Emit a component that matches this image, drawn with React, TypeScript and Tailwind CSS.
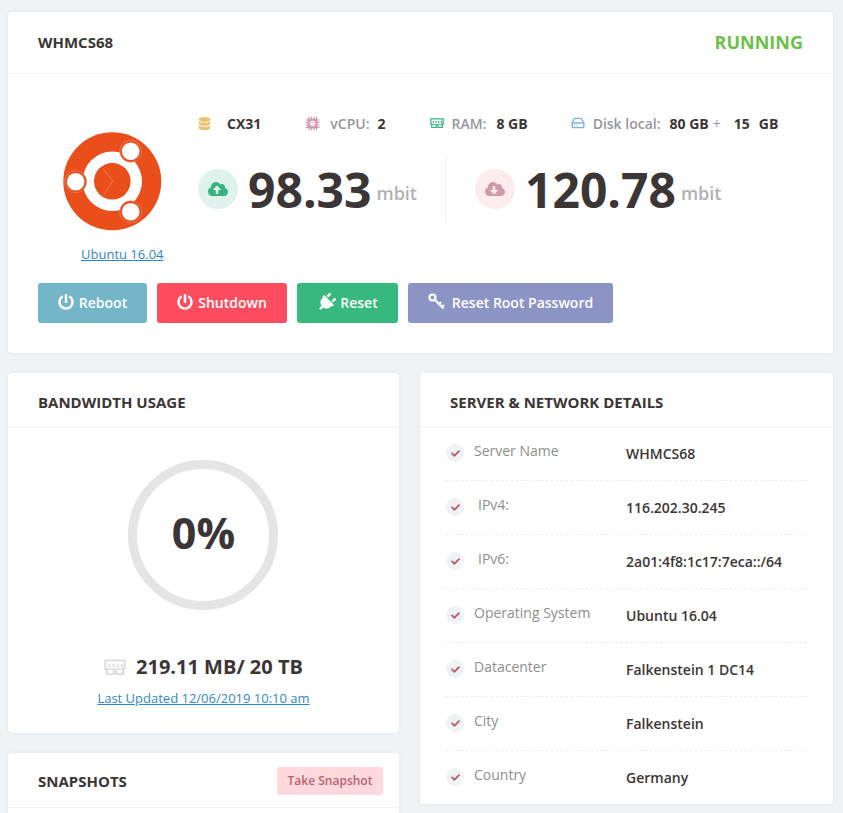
import { FaCheck, FaCloudDownloadAlt, FaCloudUploadAlt, FaDatabase, FaPlug, FaPowerOff } from "react-icons/fa"
import { HardDrive } from "lucide-react"

const details = [
  { label: "Server Name", value: "WHMCS68" },
  { label: "IPv4:", value: "116.202.30.245", indent: true },
  { label: "IPv6:", value: "2a01:4f8:1c17:7eca::/64", indent: true },
  { label: "Operating System", value: "Ubuntu 16.04" },
  { label: "Datacenter", value: "Falkenstein 1 DC14" },
  { label: "City", value: "Falkenstein" },
  { label: "Country", value: "Germany" },
]

function UbuntuLogo() {
  return (
    <svg width="100" height="100" viewBox="0 0 100 100" className="block">
      <circle cx="49.300" cy="49.300" r="49" fill="#e94e1b" />
      <circle cx="49.300" cy="49.300" r="29.700" fill="#fff" />
      <circle cx="49.300" cy="49.300" r="18.300" fill="#e94e1b" />
      <path d="M40.300 37.300 L49.700 48.700 L40.300 64" fill="none" stroke="#f3987a" strokeWidth="0.6" />
      <circle cx="12.700" cy="49.700" r="11" fill="#e94e1b" stroke="#f3987a" strokeWidth="0.5" />
      <circle cx="12.700" cy="49.700" r="8.800" fill="#fff" />
      <circle cx="67.700" cy="19.300" r="11" fill="#e94e1b" stroke="#f3987a" strokeWidth="0.5" />
      <circle cx="67.700" cy="19.300" r="8.800" fill="#fff" />
      <circle cx="67.700" cy="79.700" r="11" fill="#e94e1b" stroke="#f3987a" strokeWidth="0.5" />
      <circle cx="67.700" cy="79.700" r="8.800" fill="#fff" />
    </svg>
  )
}

function ChipIcon() {
  return (
    <svg width="15" height="15" viewBox="0 0 15 15" className="ml-[44px] text-[#cf9ab0]">
      <path d="M4 0.500V14.500M6.500 0.500V14.500M9 0.500V14.500M11.500 0.500V14.500M0.500 4H14.500M0.500 6.500H14.500M0.500 9H14.500M0.500 11.500H14.500" stroke="currentColor" strokeWidth="1" />
      <rect x="2.500" y="2.500" width="10" height="10" rx="1" fill="currentColor" />
      <circle cx="7.500" cy="7.500" r="3" fill="#fff" opacity="0.7" />
    </svg>
  )
}

function RamIcon({ className, size }: { className: string; size: number }) {
  return (
    <svg width={size} height={(size * 12) / 16} viewBox="0 0 16 12" fill="none" stroke="currentColor" className={className}>
      <path d="M1 1H15V7H14V11H9V9H7V11H2V7H1Z" strokeWidth="1.400" />
      <path d="M4 3.500V6M7 3.500V6M10 3.500V6M13 3.500V6" strokeWidth="1.400" />
      <path d="M1 7.500H15" strokeWidth="1" />
    </svg>
  )
}

function KeyIcon() {
  return (
    <svg width="17" height="17" viewBox="0 0 17 17" fill="none" stroke="currentColor" strokeWidth="2.200" className="mr-[7px] -mt-[2px]">
      <circle cx="4.500" cy="4.500" r="3" />
      <path d="M7 7L15.500 15.500M11 11L13 9M14 14L16 12" />
    </svg>
  )
}

function Speed({ value, up }: { value: string; up?: boolean }) {
  return (
    <div className="flex items-center">
      <div className={`w-10 h-10 rounded-full flex items-center justify-center ${up ? "bg-[#dff2ec]" : "bg-[#fdecee]"}`}>
        {up ? <FaCloudUploadAlt size={20} className="text-[#36b37e]" /> : <FaCloudDownloadAlt size={20} className="text-[#cf9aa8]" />}
      </div>
      <span className="ml-[10px] mt-[2px] text-[48px] leading-[60px] font-bold text-[#3b3535]">{value}</span>
      <span className="ml-[5px] mt-[8px] text-[18px] font-semibold text-[#b1b1b5]">mbit</span>
    </div>
  )
}

export default function App() {
  return (
    <div className="h-[813px] overflow-hidden bg-[#eff3f6] px-2 pt-3 font-['Open_Sans',sans-serif] text-[#3b3535]">
      {/* server card */}
      <div className="w-[825px] h-[341px] bg-white rounded shadow-[0_0_4px_rgba(0,0,0,0.06)]">
        <div className="h-[62px] flex items-center justify-between px-[30px] border-b border-[#f1f3f5]">
          <h1 className="text-[15px] font-bold pb-[1px]">WHMCS68</h1>
          <span className="text-[18px] font-bold text-[#6cc04a]">RUNNING</span>
        </div>
        <div className="flex pl-[30px] pt-[32px]">
          <div className="w-[160px] pl-[25px] flex flex-col">
            <div className="mt-[26px]"><UbuntuLogo /></div>
            <a className="ml-[18px] mt-[13px] text-[13px] text-[#2f86d0] underline whitespace-nowrap">Ubuntu 16.04</a>
          </div>
          <div>
            <div className="flex items-center text-[14px] h-[34px]">
              <FaDatabase size={13} className="text-[#e8c46e]" />
              <b className="ml-[16px]">CX31</b>
              <ChipIcon />
              <span className="ml-[10px] font-semibold text-[#96969e]">vCPU:</span>
              <b className="ml-[8px]">2</b>
              <RamIcon size={14} className="ml-[44px] text-[#36b37e]" />
              <span className="ml-[8px] font-semibold text-[#96969e]">RAM:</span>
              <b className="ml-[10px]">8 GB</b>
              <HardDrive size={14} strokeWidth={2.4} className="ml-[43px] text-[#7db3ea]" />
              <span className="ml-[8px] font-semibold text-[#96969e]">Disk local:</span>
              <b className="ml-[9px]">80 GB</b>
              <span className="ml-[4px] text-[#96969e]">+</span>
              <b className="ml-[13px]">15</b>
              <b className="ml-[9px]">GB</b>
            </div>
            <div className="flex items-center mt-[15px]">
              <div className="w-[247px]"><Speed up value="98.33" /></div>
              <div className="w-px h-[68px] bg-[#f1f1f1]" />
              <div className="ml-[29px]"><Speed value="120.78" /></div>
            </div>
          </div>
        </div>
        <div className="flex gap-[10px] pl-[30px] mt-[18px] text-white text-[14px] font-semibold">
          <button className="w-[109px] h-10 rounded-[3px] bg-[#72b6c8] flex items-center justify-center"><FaPowerOff size={16} className="mr-[5px] -mt-[2px]" />Reboot</button>
          <button className="w-[130px] h-10 rounded-[3px] bg-[#ff4d5f] flex items-center justify-center"><FaPowerOff size={16} className="mr-[5px] -mt-[2px]" />Shutdown</button>
          <button className="w-[101px] h-10 rounded-[3px] bg-[#36b87f] flex items-center justify-center"><FaPlug size={19} className="mr-[4px] rotate-45" />Reset</button>
          <button className="w-[205px] h-10 rounded-[3px] bg-[#8c94c6] flex items-center justify-center"><KeyIcon />Reset Root Password</button>
        </div>
      </div>

      <div className="flex mt-5 items-start">
        <div className="w-[391px]">
          {/* bandwidth */}
          <div className="h-[360px] bg-white rounded shadow-[0_0_4px_rgba(0,0,0,0.06)]">
            <div className="h-[55px] flex items-center px-[30px] border-b border-[#f1f3f5]">
              <h2 className="text-[15px] font-bold pt-[5px]">BANDWIDTH USAGE</h2>
            </div>
            <div className="flex flex-col items-center pt-[32px] pr-[2px]">
              <div className="w-[150px] h-[150px] rounded-full border-[9px] border-[#e5e5e5] flex items-center justify-center">
                <span className="text-[43px] font-bold mb-[4px] ml-[2px]">0%</span>
              </div>
              <div className="flex items-center mt-[42px] ml-[2px]">
                <RamIcon size={22} className="text-[#dcdcdc]" />
                <b className="ml-[10px] text-[20px]">219.11 MB/ 20 TB</b>
              </div>
              <a className="mt-[7px] ml-[2px] text-[13px] text-[#2f86d0] underline">Last Updated 12/06/2019 10:10 am</a>
            </div>
          </div>
          {/* snapshots */}
          <div className="mt-5 h-[200px] bg-white rounded shadow-[0_0_4px_rgba(0,0,0,0.06)]">
            <div className="h-[55px] flex items-center justify-between pl-[30px] pr-4 border-b border-[#f1f3f5]">
              <h2 className="text-[15px] font-bold pt-[3px]">SNAPSHOTS</h2>
              <button className="mt-[1px] w-[106px] h-7 rounded-[3px] bg-[#ffd9dc] text-[12px] font-semibold text-[#b9626f]">Take Snapshot</button>
            </div>
          </div>
        </div>

        {/* details */}
        <div className="ml-[21px] w-[413px] h-[431px] bg-white rounded shadow-[0_0_4px_rgba(0,0,0,0.06)]">
          <div className="h-[55px] flex items-center px-[30px] border-b border-[#f1f3f5]">
            <h2 className="text-[15px] font-bold pt-[5px]">SERVER &amp; NETWORK DETAILS</h2>
          </div>
          <div className="-mt-px pl-[26px] pr-[26px]">
            {details.map((d, i) => (
              <div key={d.label} className={`flex h-[54px] ${i < details.length - 1 ? "border-b border-dashed border-[#eeeeee]" : ""}`}>
                <div className="w-[180px] flex items-start pt-[13px]">
                  <span className="mt-[4px] w-[18px] h-[18px] rounded-full bg-[#eff3f6] flex items-center justify-center">
                    <FaCheck size={9} className="text-[#c0566a]" />
                  </span>
                  <span className={`text-[14px] text-[#8e8e8e] ${d.indent ? "ml-[14px]" : "ml-[10px]"}`}>{d.label}</span>
                </div>
                <div className="pt-[16px] text-[14px] font-semibold">{d.value}</div>
              </div>
            ))}
          </div>
        </div>
      </div>
    </div>
  )
}
